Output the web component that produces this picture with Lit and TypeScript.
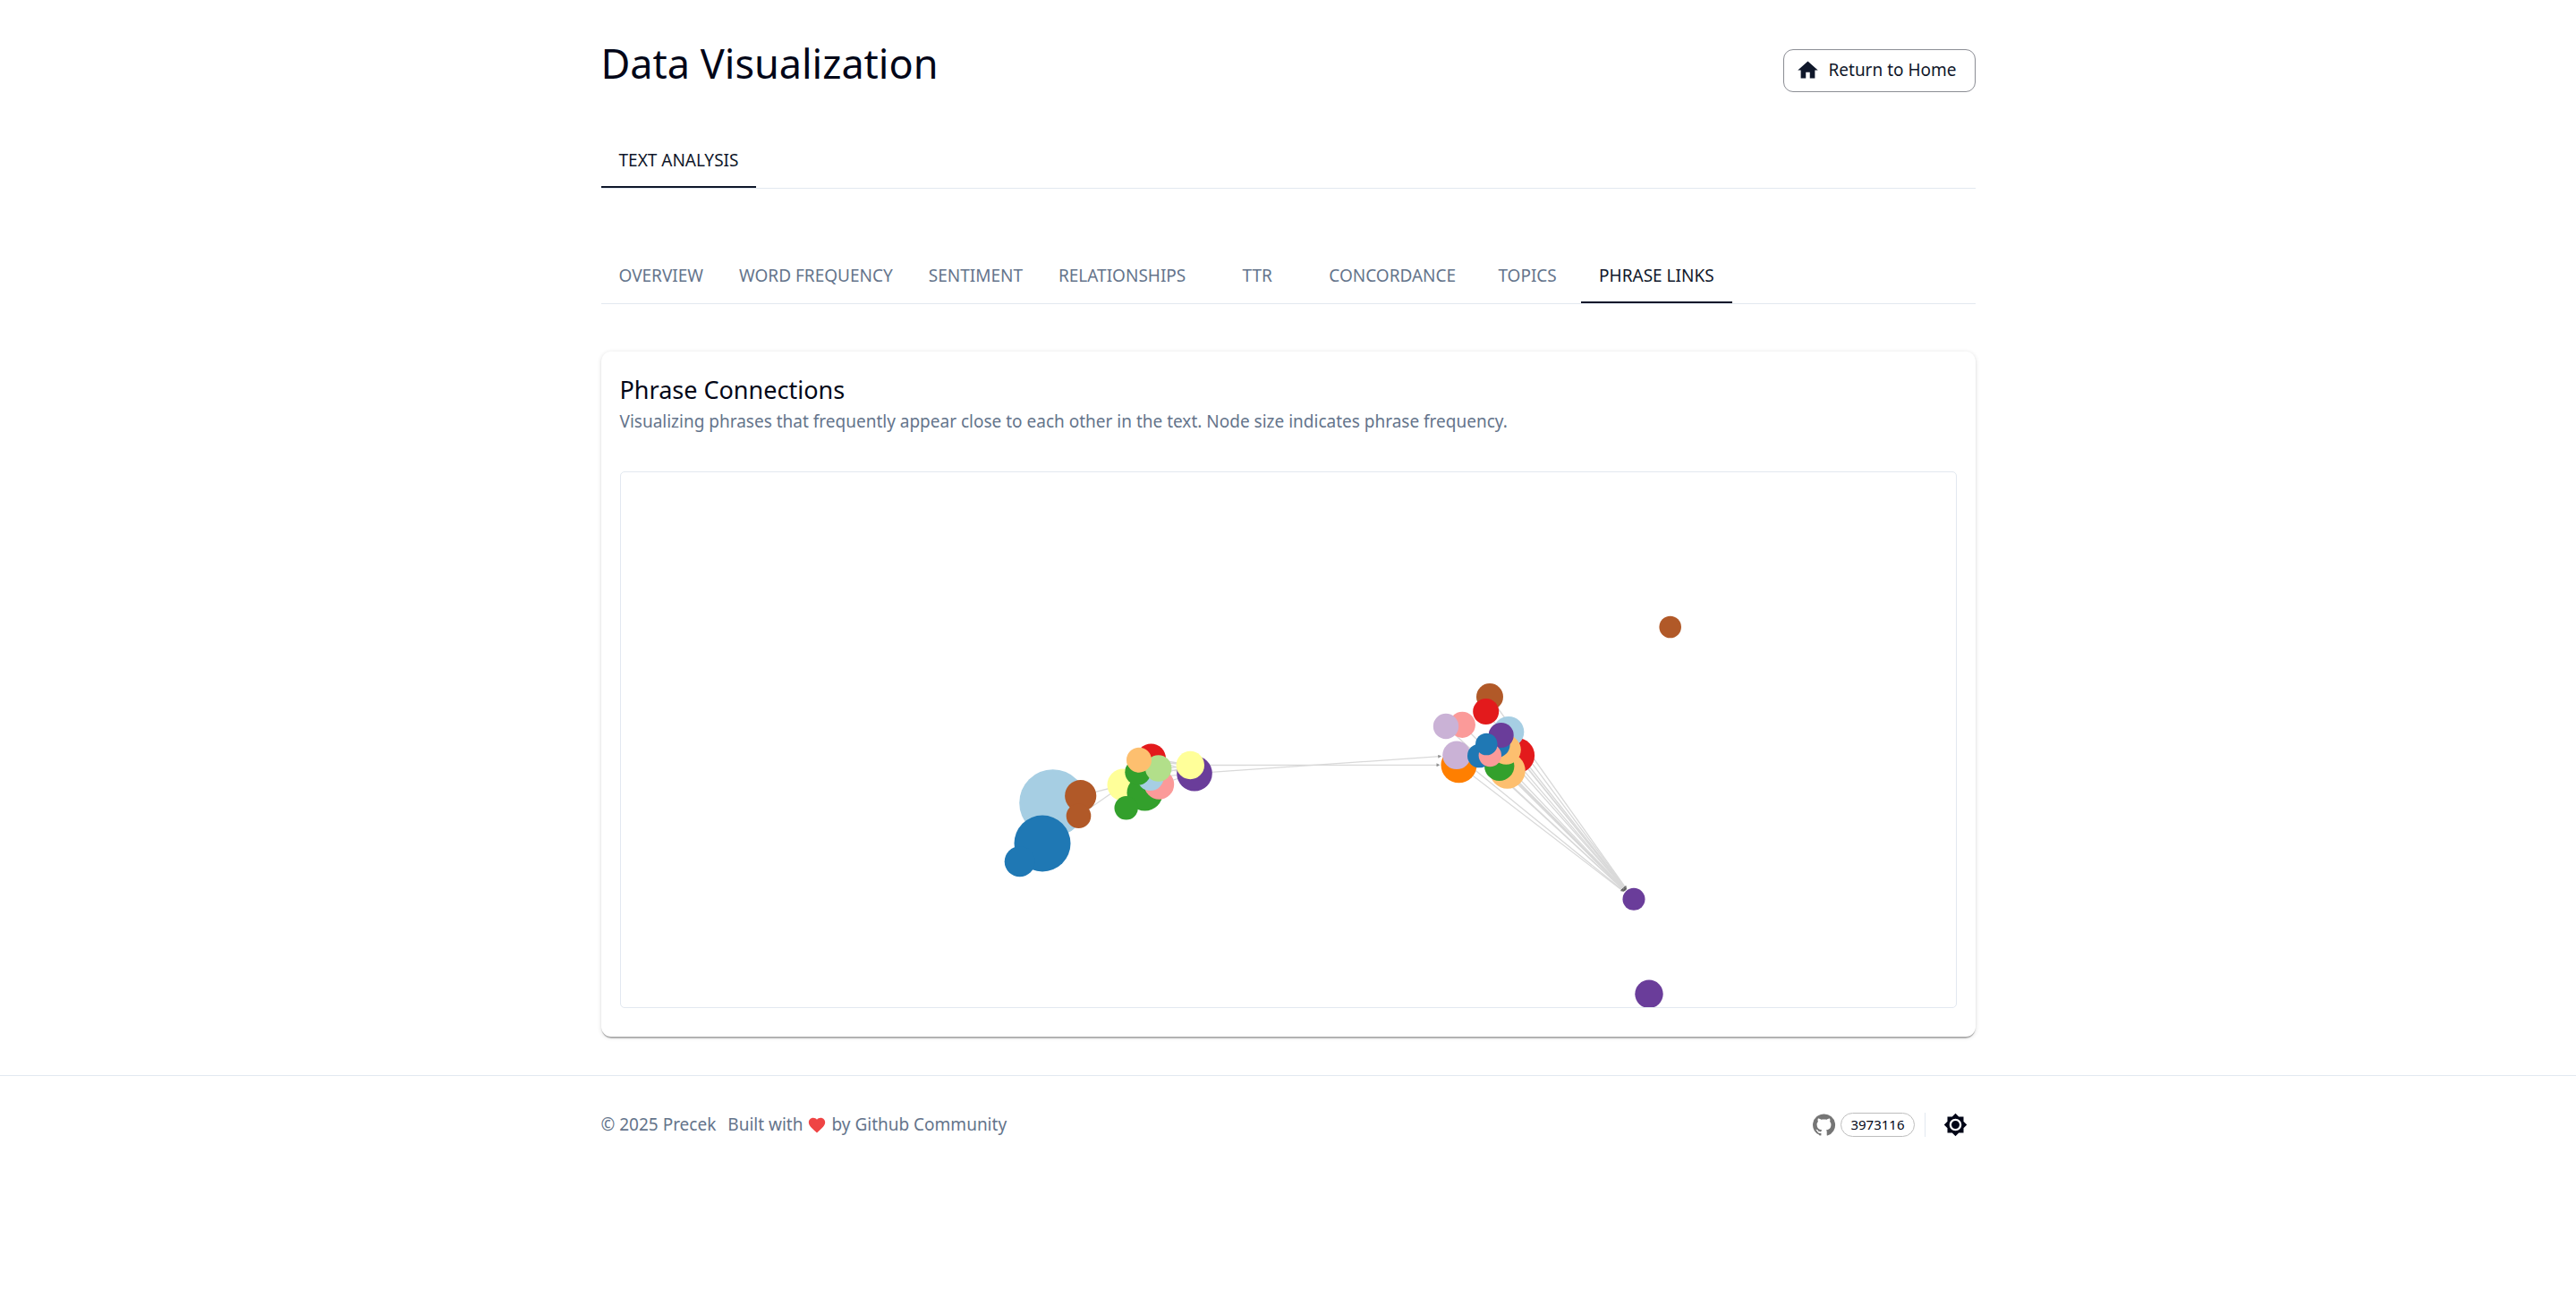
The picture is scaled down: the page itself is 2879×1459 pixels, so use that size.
import { LitElement, html, svg, css, nothing } from "lit";
import { customElement, property, state } from "lit/decorators.js";

type Node = { x: number; y: number; r: number; color: string };
type Link = { from: string; to: string; arrow: boolean };

const C = {
  sky: "#a6cee3",
  blue: "#1f78b4",
  mint: "#b2df8a",
  green: "#33a02c",
  pink: "#fb9a99",
  red: "#e31a1c",
  peach: "#fdbf6f",
  orange: "#ff7f00",
  lilac: "#cab2d6",
  purple: "#6a3d9a",
  yellow: "#ffff99",
  brown: "#b15928",
};

/* Nodes in paint order. */
const NODES: Record<string, Node> = {
  a1: { x: 482.7, y: 369.7, r: 37.5, color: C.sky },
  a2: { x: 471, y: 415, r: 31.5, color: C.blue },
  b1: { x: 561.5, y: 349.5, r: 18, color: C.yellow },
  b2: { x: 585.5, y: 358.5, r: 20, color: C.green },
  b3: { x: 592.5, y: 320, r: 16.5, color: C.red },
  b4: { x: 601.5, y: 349, r: 16.7, color: C.pink },
  c1: { x: 936.5, y: 327.3, r: 20, color: C.orange },
  p1: { x: 641, y: 336.7, r: 19.8, color: C.purple },
  c2: { x: 1001.3, y: 316.7, r: 19.8, color: C.red },
  c3: { x: 990.7, y: 333.7, r: 20, color: C.peach },
  a3: { x: 513.7, y: 361.7, r: 17.6, color: C.brown },
  c4: { x: 992, y: 290.3, r: 17.3, color: C.sky },
  c5: { x: 981.7, y: 328.3, r: 16.7, color: C.green },
  c6: { x: 989.3, y: 310.3, r: 16.5, color: C.peach },
  c7: { x: 934, y: 316.3, r: 15.8, color: C.lilac },
  a4: { x: 445.7, y: 435.3, r: 17, color: C.blue },
  p2: { x: 636.3, y: 327.5, r: 15.7, color: C.yellow },
  z1: { x: 1149, y: 583.3, r: 15.7, color: C.purple },
  d1: { x: 971, y: 251, r: 15, color: C.brown },
  b5: { x: 591.7, y: 341.3, r: 14.8, color: C.sky },
  b6: { x: 577.7, y: 335.3, r: 14.4, color: C.green },
  b7: { x: 600.7, y: 331, r: 14.7, color: C.mint },
  b8: { x: 579, y: 321.7, r: 14, color: C.peach },
  c8: { x: 979, y: 304.5, r: 14.6, color: C.blue },
  d2: { x: 966.7, y: 267.5, r: 14.5, color: C.red },
  d3: { x: 940.3, y: 282.3, r: 14.6, color: C.pink },
  d4: { x: 922, y: 284, r: 14.2, color: C.lilac },
  c9: { x: 983.7, y: 294, r: 14, color: C.purple },
  a5: { x: 511.5, y: 384.3, r: 13.8, color: C.brown },
  b9: { x: 564.7, y: 375.3, r: 13.2, color: C.green },
  e1: { x: 959.3, y: 317, r: 13.3, color: C.blue },
  e2: { x: 971.3, y: 316.5, r: 12.7, color: C.pink },
  e3: { x: 967.3, y: 304, r: 12.3, color: C.blue },
  z2: { x: 1132, y: 477.3, r: 12.5, color: C.purple },
  z3: { x: 1172.7, y: 173, r: 12.3, color: C.brown },
};

const link = (to: string, arrow: boolean, ...sources: string[]): Link[] =>
  sources.map((from) => ({ from, to, arrow }));

const LINKS: Link[] = [
  ...link("z2", true, "c1", "c2", "c3", "c4", "c5", "c6", "c7", "c8", "c9", "d1", "d2", "d3", "d4", "e1", "e2", "e3"),
  ...link("c7", true, "p1"),
  ...link("c1", true, "p2"),
  ...link("p1", false, "b3", "b4", "b5", "b7"),
  ...link("p2", false, "b3", "b5", "b6", "b8"),
  ...link("b1", false, "a3", "a5"),
];

/* An arrow leaves room for its tip in front of the target circle. */
function segment({ from, to, arrow }: Link) {
  const a = NODES[from];
  const b = NODES[to];
  const len = Math.hypot(b.x - a.x, b.y - a.y);
  const t = arrow ? (len - b.r - 3) / len : 1;
  return svg`<line class="link" x1=${a.x} y1=${a.y}
    x2=${a.x + (b.x - a.x) * t} y2=${a.y + (b.y - a.y) * t}
    marker-end=${arrow ? "url(#arrow)" : nothing}></line>`;
}

@customElement("phrase-graph")
export class PhraseGraph extends LitElement {
  static styles = css`
    :host {
      display: block;
      height: 598px;
      border: 1px solid #e2e8f0;
      border-radius: 5px;
      overflow: hidden;
    }
    .canvas {
      display: block;
      width: 100%;
      height: 100%;
    }
    .link {
      stroke: #d9d9d9;
      stroke-width: 1.3;
    }
    .tip {
      fill: #555555;
      fill-opacity: 0.6;
    }
  `;

  render() {
    return html`
      <svg class="canvas" viewBox="0 0 1492 598" role="img" aria-label="Phrase Connections">
        <defs>
          <marker id="arrow" viewBox="0 -5 10 10" refX="5" refY="0"
            markerWidth="4" markerHeight="4" markerUnits="userSpaceOnUse" orient="auto">
            <path class="tip" d="M0 -5L10 0L0 5"></path>
          </marker>
        </defs>
        ${LINKS.map(segment)}
        ${Object.values(NODES).map(
          (n) => svg`<circle cx=${n.x} cy=${n.y} r=${n.r} fill=${n.color}></circle>`
        )}
      </svg>
    `;
  }
}

@customElement("tab-strip")
export class TabStrip extends LitElement {
  @property({ attribute: false }) tabs: string[] = [];
  @property({ type: Number }) selected = 0;

  static styles = css`
    .strip {
      display: flex;
      border-bottom: 1px solid #e2e8f0;
    }
    .tab {
      min-width: 120px;
      height: 64px;
      padding: 2px 20px 0;
      border: 0;
      background: none;
      color: #64748b;
      font: inherit;
      text-transform: uppercase;
      white-space: nowrap;
      cursor: pointer;
    }
    .tab[aria-selected="true"] {
      color: #0f172a;
      box-shadow: inset 0 -2px #0f172a;
    }
  `;

  render() {
    return html`
      <div class="strip" role="tablist">
        ${this.tabs.map(
          (name, i) => html`
            <button class="tab" role="tab" aria-selected=${i === this.selected ? "true" : "false"}
              @click=${() => (this.selected = i)}>${name}</button>
          `
        )}
      </div>
    `;
  }
}

@customElement("app-root")
export class AppRoot extends LitElement {
  @state() private sections = ["Text Analysis"];
  @state() private views = [
    "Overview",
    "Word Frequency",
    "Sentiment",
    "Relationships",
    "TTR",
    "Concordance",
    "Topics",
    "Phrase Links",
  ];

  static styles = css`
    :host {
      display: block;
      background: #ffffff;
      color: #020617;
      font-family: "Noto Sans", sans-serif;
      font-size: 19px;
      line-height: 27px;
    }
    .container {
      max-width: 1536px;
      margin: 0 auto;
    }
    .page {
      padding: 43px 0;
    }
    .header {
      display: flex;
      align-items: center;
      justify-content: space-between;
      margin-bottom: 32px;
    }
    .title {
      margin: 0 0 16px;
      font-size: 45px;
      font-weight: 400;
      line-height: 55px;
    }
    .home {
      display: flex;
      align-items: center;
      gap: 9px;
      height: 48px;
      padding: 0 20px 0 13px;
      box-sizing: border-box;
      border: 1px solid #8b8d94;
      border-radius: 11px;
      color: #0f172a;
      text-decoration: none;
    }
    .icon {
      display: block;
      width: 27px;
      height: 27px;
      fill: currentColor;
    }
    .views {
      display: block;
      margin: 64px 0 53px;
    }
    .card {
      padding: 21px 21px 32px;
      border-radius: 11px;
      background: #ffffff;
      box-shadow:
        0 3px 1px -1px rgba(0, 0, 0, 0.2),
        0 1px 1px rgba(0, 0, 0, 0.14),
        0 1px 5px rgba(0, 0, 0, 0.14);
    }
    .card-title {
      margin: 0;
      font-size: 27px;
      font-weight: 400;
      line-height: 43px;
    }
    .card-text {
      margin: 0 0 41px;
      color: #64748b;
      line-height: 29px;
    }
    .footer {
      border-top: 1px solid #e2e8f0;
      padding: 32px 0;
      color: #64748b;
    }
    .footer-row {
      display: flex;
      align-items: center;
      justify-content: space-between;
    }
    .credits {
      display: flex;
      gap: 13px;
    }
    .built {
      display: flex;
      align-items: center;
      gap: 5px;
    }
    .heart {
      width: 22px;
      height: 22px;
      fill: #ef4444;
    }
    .tools,
    .repo {
      display: flex;
      align-items: center;
    }
    .tools {
      gap: 11px;
    }
    .repo {
      gap: 5px;
      color: #757575;
      text-decoration: none;
    }
    .chip {
      padding: 0 10px;
      border: 1px solid #bdbdbd;
      border-radius: 14px;
      color: #020617;
      font-size: 15px;
      line-height: 25px;
    }
    .divider {
      width: 1px;
      height: 27px;
      background: #e2e8f0;
    }
    .theme {
      padding: 9px;
      border: 0;
      background: none;
      color: #020617;
      cursor: pointer;
    }
  `;

  render() {
    return html`
      <main class="container page">
        <header class="header">
          <h1 class="title">Data Visualization</h1>
          <a class="home" href="/">
            <svg class="icon" viewBox="0 0 24 24" aria-hidden="true">
              <path d="M10 20v-6h4v6h5v-8h3L12 3 2 12h3v8z"></path>
            </svg>
            Return to Home
          </a>
        </header>
        <tab-strip .tabs=${this.sections}></tab-strip>
        <tab-strip class="views" .tabs=${this.views} .selected=${7}></tab-strip>
        <section class="card">
          <h2 class="card-title">Phrase Connections</h2>
          <p class="card-text">
            Visualizing phrases that frequently appear close to each other in the text. Node size indicates phrase frequency.
          </p>
          <phrase-graph></phrase-graph>
        </section>
      </main>
      <footer class="footer">
        <div class="container footer-row">
          <div class="credits">
            <span>© 2025 Precek</span>
            <span class="built">
              Built with
              <svg class="heart" viewBox="0 0 24 24" role="img" aria-label="love">
                <path d="m12 21.35-1.45-1.32C5.4 15.36 2 12.28 2 8.5 2 5.42 4.42 3 7.5 3c1.74 0 3.41.81 4.5 2.09C13.09 3.81 14.76 3 16.5 3 19.58 3 22 5.42 22 8.5c0 3.78-3.4 6.86-8.55 11.54z"></path>
              </svg>
              by Github Community
            </span>
          </div>
          <div class="tools">
            <a class="repo" href="#repo" aria-label="GitHub, 3973116">
              <svg class="icon" viewBox="0 0 24 24" aria-hidden="true">
                <path d="M12 1.27a11 11 0 00-3.48 21.46c.55.09.73-.28.73-.55v-1.84c-3.03.64-3.67-1.46-3.67-1.46-.55-1.29-1.28-1.65-1.28-1.65-.92-.65.1-.65.1-.65 1.1 0 1.73 1.1 1.73 1.1.92 1.65 2.57 1.2 3.21.92a2 2 0 01.64-1.47c-2.47-.27-5.04-1.19-5.04-5.5 0-1.1.46-2.1 1.2-2.84a3.76 3.76 0 010-2.93s.91-.28 3.11 1.1c1.8-.49 3.7-.49 5.5 0 2.1-1.38 3.02-1.1 3.02-1.1a3.76 3.76 0 01.1 2.93c.83.74 1.2 1.74 1.2 2.94 0 4.21-2.57 5.13-5.04 5.4.45.37.82.92.82 2.02v3.03c0 .27.1.64.73.55A11 11 0 0012 1.27"></path>
              </svg>
              <span class="chip">3973116</span>
            </a>
            <span class="divider"></span>
            <button class="theme" aria-label="Toggle theme">
              <svg class="icon" viewBox="0 0 24 24" aria-hidden="true">
                <path d="M20 8.69V4h-4.69L12 .69 8.69 4H4v4.69L.69 12 4 15.31V20h4.69L12 23.31 15.31 20H20v-4.69L23.31 12 20 8.69zM12 18c-3.31 0-6-2.69-6-6s2.69-6 6-6 6 2.69 6 6-2.69 6-6 6zm0-10c-2.21 0-4 1.79-4 4s1.79 4 4 4 4-1.79 4-4-1.79-4-4-4z"></path>
              </svg>
            </button>
          </div>
        </div>
      </footer>
    `;
  }
}
